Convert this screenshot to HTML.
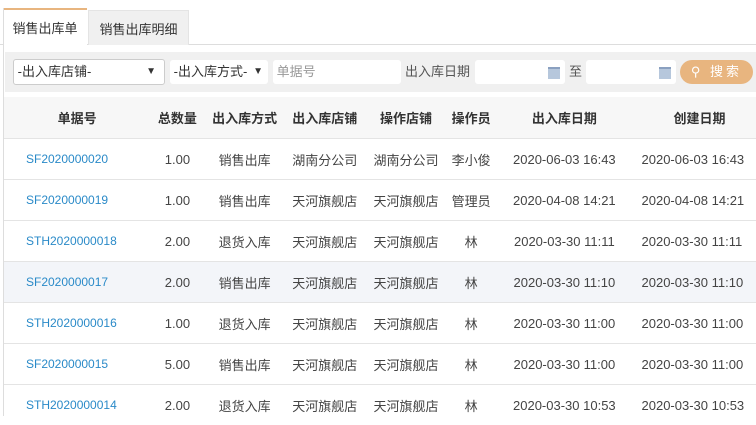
<!DOCTYPE html>
<html><head><meta charset="utf-8"><style>
body{margin:0;width:756px;height:416px;overflow:hidden;background:#fff;font-family:"Liberation Sans","Noto Sans CJK SC",sans-serif;font-size:13px;color:#333;position:relative}
.a{position:absolute}
.tab{position:absolute;top:10px;height:34px;line-height:38px;text-align:center;font-size:13px;color:#333}
.inp{position:absolute;top:60px;height:24px;background:#fff;border-radius:3px;line-height:24px;font-size:13px;color:#999}
.cal{position:absolute;top:7px;width:12px;height:10px;background:#b6c7dc;border-top:2px solid #8aa0c0}
table{position:absolute;left:4px;top:97px;border-collapse:collapse;width:800px;table-layout:fixed}
td,th{height:40px;padding:0;text-align:center;white-space:nowrap;font-size:13px;overflow:visible}
th{background:#f7f7f7;font-weight:bold;color:#333;height:41px}
td{border-top:1px solid #e4e4e4;color:#444}
td.l{text-align:left;padding-left:22px;color:#2a8ac8;font-size:12px}
td.c{text-align:left;padding-left:8px}
tr.h td{background:#f3f5f9}
</style></head><body>
<div class="a" style="left:0;top:44px;width:756px;height:1px;background:#ddd"></div>
<div class="tab" style="left:3px;width:84px;background:#fff;border-top:2px solid #e8b57f;top:8px;height:37px">销售出库单</div>
<div class="tab" style="left:88px;width:99px;background:#f0f0f0;border:1px solid #e4e4e4;border-bottom:none">销售出库明细</div>
<div class="a" style="left:3px;top:8px;width:1px;height:408px;background:#ddd"></div>
<div class="a" style="left:5px;top:52px;width:751px;height:40px;background:#f0f0f0"></div>
<div class="inp" style="left:13px;width:150px;border:1px solid #ccc;top:59px;color:#333">&nbsp;-出入库店铺-<span style="position:absolute;right:8px;font-size:10px">▼</span></div>
<div class="inp" style="left:170px;width:98px;color:#333">&nbsp;-出入库方式-<span style="position:absolute;right:5px;font-size:10px">▼</span></div>
<div class="inp" style="left:273px;width:128px;background:#fff">&nbsp;单据号</div>
<div class="a" style="left:405px;top:60px;line-height:24px;color:#555">出入库日期</div>
<div class="inp" style="left:475px;width:90px"><div class="cal" style="left:73px"></div></div>
<div class="a" style="left:569px;top:60px;line-height:24px;color:#555">至</div>
<div class="inp" style="left:586px;width:90px"><div class="cal" style="left:73px"></div></div>
<div class="inp" style="left:680px;width:73px;background:#e8b57f;border-radius:12px;color:#fff;text-align:center;letter-spacing:3px">⚲ 搜索</div>
<table>
<colgroup><col style="width:146px"><col style="width:54px"><col style="width:80px"><col style="width:80px"><col style="width:82px"><col style="width:48px"><col style="width:138px"><col style="width:170px"></colgroup>
<tr><th>单据号</th><th>总数量</th><th>出入库方式</th><th>出入库店铺</th><th>操作店铺</th><th>操作员</th><th>出入库日期</th><th style="text-align:left;padding-left:40px">创建日期</th></tr>
<tr><td class="l">SF2020000020</td><td>1.00</td><td>销售出库</td><td>湖南分公司</td><td>湖南分公司</td><td>李小俊</td><td>2020-06-03 16:43</td><td class="c">2020-06-03 16:43</td></tr>
<tr><td class="l">SF2020000019</td><td>1.00</td><td>销售出库</td><td>天河旗舰店</td><td>天河旗舰店</td><td>管理员</td><td>2020-04-08 14:21</td><td class="c">2020-04-08 14:21</td></tr>
<tr><td class="l">STH2020000018</td><td>2.00</td><td>退货入库</td><td>天河旗舰店</td><td>天河旗舰店</td><td>林</td><td>2020-03-30 11:11</td><td class="c">2020-03-30 11:11</td></tr>
<tr class="h"><td class="l">SF2020000017</td><td>2.00</td><td>销售出库</td><td>天河旗舰店</td><td>天河旗舰店</td><td>林</td><td>2020-03-30 11:10</td><td class="c">2020-03-30 11:10</td></tr>
<tr><td class="l">STH2020000016</td><td>1.00</td><td>退货入库</td><td>天河旗舰店</td><td>天河旗舰店</td><td>林</td><td>2020-03-30 11:00</td><td class="c">2020-03-30 11:00</td></tr>
<tr><td class="l">SF2020000015</td><td>5.00</td><td>销售出库</td><td>天河旗舰店</td><td>天河旗舰店</td><td>林</td><td>2020-03-30 11:00</td><td class="c">2020-03-30 11:00</td></tr>
<tr><td class="l">STH2020000014</td><td>2.00</td><td>退货入库</td><td>天河旗舰店</td><td>天河旗舰店</td><td>林</td><td>2020-03-30 10:53</td><td class="c">2020-03-30 10:53</td></tr>
</table>
</body></html>
